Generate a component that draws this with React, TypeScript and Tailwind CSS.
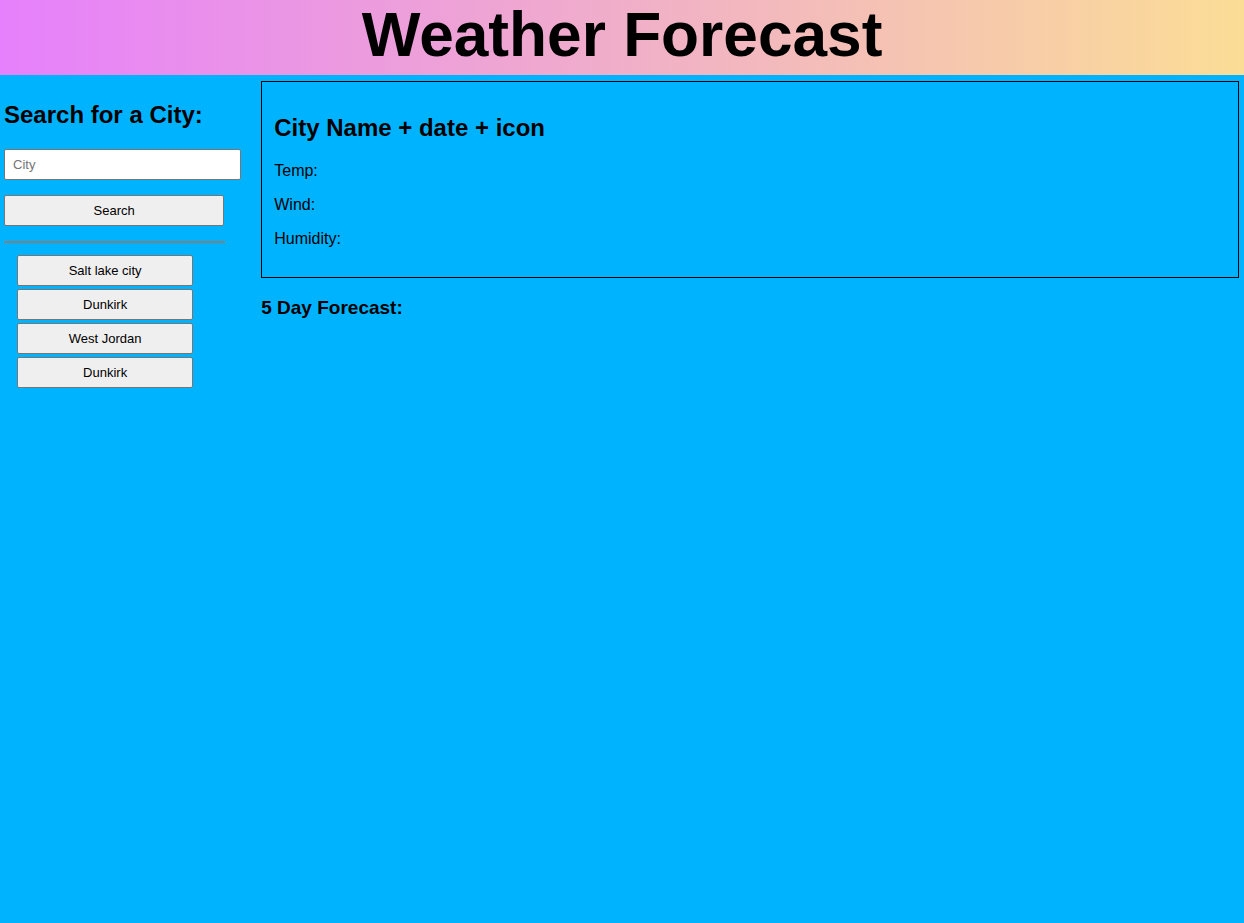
import { useState } from "react";
import type { FormEvent } from "react";

const details = ["Temp:", "Wind:", "Humidity:"];

const buttonStyle =
  "h-[31px] rounded-[2px] border border-[#767676] bg-[#efefef] text-[13px] leading-4 text-black hover:bg-[#e5e5e5]";

function SearchPanel() {
  const [city, setCity] = useState("");
  const [history, setHistory] = useState(["Salt lake city", "Dunkirk", "West Jordan", "Dunkirk"]);

  const handleSubmit = (event: FormEvent) => {
    event.preventDefault();
    const name = city.trim();
    if (name) {
      setHistory([...history, name]);
      setCity("");
    }
  };

  return (
    <aside className="w-[21%] shrink-0 pt-[26px] pr-5 pl-1">
      <form onSubmit={handleSubmit} className="flex flex-col">
        <label htmlFor="city" className="text-2xl leading-7 font-bold whitespace-nowrap">
          Search for a City:
        </label>
        <input
          id="city"
          type="text"
          placeholder="City"
          value={city}
          onChange={(event) => setCity(event.target.value)}
          className="mt-5 h-[31px] w-full rounded-[2px] border border-[#767676] bg-white px-2 text-[13px] leading-4 placeholder:text-[#757575]"
        />
        <button type="submit" className={`${buttonStyle} mt-[15px] mr-[17px]`}>
          Search
        </button>
      </form>
      <hr className="mt-[15px] mr-4 border-t-2 border-[#808080]" />
      <div className="mt-3 mr-12 ml-[13px] flex flex-col gap-[3px]">
        {history.map((name, index) => (
          <button key={index} type="button" className={buttonStyle}>
            {name}
          </button>
        ))}
      </div>
    </aside>
  );
}

export default function App() {
  return (
    <div className="min-h-screen bg-[#00b3ff] font-['Liberation_Sans',Arial,sans-serif] text-black">
      <header className="bg-linear-to-r/srgb from-[#e680fc] to-[#fbdd96] pb-[5px]">
        <h1 className="text-center text-[5vw] leading-[70px] font-bold">Weather Forecast</h1>
      </header>
      <div className="flex">
        <SearchPanel />
        <main className="min-w-0 flex-1 pt-1.5 pr-[5px]">
          <section className="border border-black px-3 pt-8 pb-[29px]">
            <h2 className="text-2xl leading-7 font-bold">City Name + date + icon</h2>
            <div className="mt-5 flex flex-col gap-4 text-base leading-[18px]">
              {details.map((label) => (
                <p key={label}>{label}</p>
              ))}
            </div>
          </section>
          <h3 className="mt-[19px] text-[19px] leading-[22px] font-bold">5 Day Forecast:</h3>
        </main>
      </div>
    </div>
  );
}
